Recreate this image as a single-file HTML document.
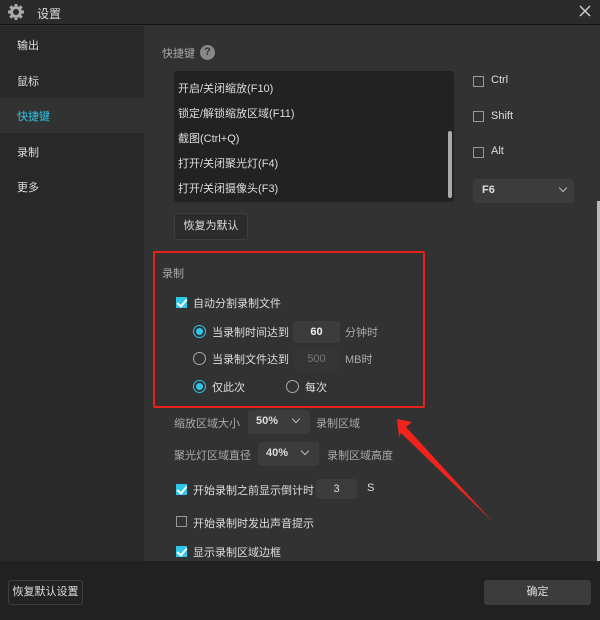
<!DOCTYPE html><html><head><meta charset="utf-8"><style>
*{margin:0;padding:0;box-sizing:border-box}
body{width:600px;height:620px;background:#323232;font-family:"Liberation Sans","Noto Sans CJK SC",sans-serif;font-size:11px;color:#ddd;position:relative;overflow:hidden}
.a{position:absolute;white-space:nowrap}
.cb{position:absolute;width:11px;height:11px;border:1px solid #999}
.cbon{position:absolute;width:11px;height:11px;background:#2fc6ea}
.cbon:after{content:"";position:absolute;left:3px;top:0px;width:4px;height:8px;border:solid #fff;border-width:0 2px 2px 0;transform:rotate(40deg)}
.rd{position:absolute;width:13px;height:13px;border:1px solid #aaa;border-radius:50%}
.rdon{position:absolute;width:13px;height:13px;border:1px solid #2fc6ea;border-radius:50%}
.rdon:after{content:"";position:absolute;left:2px;top:2px;width:7px;height:7px;border-radius:50%;background:#2fc6ea}
.box{position:absolute;background:#3c3c3c;border-radius:3px}
.chev{position:absolute;width:6px;height:6px;border:solid #bbb;border-width:0 1px 1px 0;transform:rotate(45deg)}
</style></head><body>
<div class="a" style="left:0;top:0;width:600px;height:25px;background:#2b2b2b;border-bottom:1px solid #111"></div>
<svg class="a" style="left:7px;top:3px" width="18" height="18" viewBox="0 0 18 18"><g fill="#aaa"><circle cx="9" cy="9" r="6"/><g stroke="#aaa" stroke-width="3"><line x1="9" y1="1" x2="9" y2="17"/><line x1="1" y1="9" x2="17" y2="9"/><line x1="3.3" y1="3.3" x2="14.7" y2="14.7"/><line x1="14.7" y1="3.3" x2="3.3" y2="14.7"/></g></g><circle cx="9" cy="9" r="3" fill="#2b2b2b"/></svg>
<div class="a" style="left:37px;top:5px;font-size:12px;color:#ddd">设置</div>
<svg class="a" style="left:579px;top:5px" width="12" height="12"><path d="M1 1L11 11M11 1L1 11" stroke="#ccc" stroke-width="1.5"/></svg>
<div class="a" style="left:0;top:26px;width:144px;height:535px;background:#282828"></div>
<div class="a" style="left:0;top:98px;width:144px;height:35px;background:#323232"></div>
<div class="a" style="left:17px;top:37px">输出</div>
<div class="a" style="left:17px;top:73px">鼠标</div>
<div class="a" style="left:17px;top:108px;color:#2fc6ea">快捷键</div>
<div class="a" style="left:17px;top:144px">录制</div>
<div class="a" style="left:17px;top:179px">更多</div>
<div class="a" style="left:162px;top:45px;color:#aaa">快捷键</div>
<div class="a" style="left:200px;top:45px;width:15px;height:15px;border-radius:50%;background:#888;color:#333;font-weight:bold;font-size:11px;text-align:center;line-height:15px">?</div>
<div class="a" style="left:174px;top:71px;width:280px;height:131px;background:#222;border-radius:3px"></div>
<div class="a" style="left:448px;top:131px;width:4px;height:67px;background:#aaa;border-radius:2px"></div>
<div class="a" style="left:178px;top:80px">开启/关闭缩放(F10)</div>
<div class="a" style="left:178px;top:105px">锁定/解锁缩放区域(F11)</div>
<div class="a" style="left:178px;top:130px">截图(Ctrl+Q)</div>
<div class="a" style="left:178px;top:155px">打开/关闭聚光灯(F4)</div>
<div class="a" style="left:178px;top:180px">打开/关闭摄像头(F3)</div>
<div class="cb" style="left:473px;top:76px"></div><div class="a" style="left:491px;top:74px">Ctrl</div>
<div class="cb" style="left:473px;top:111px"></div><div class="a" style="left:491px;top:110px">Shift</div>
<div class="cb" style="left:473px;top:147px"></div><div class="a" style="left:491px;top:145px">Alt</div>
<div class="box" style="left:473px;top:179px;width:101px;height:24px"></div>
<div class="a" style="left:482px;top:184px;font-weight:bold">F6</div>
<div class="chev" style="left:560px;top:185px"></div>
<div class="a" style="left:597px;top:201px;width:3px;height:360px;background:#bbb"></div>
<div class="a" style="left:174px;top:213px;width:74px;height:27px;border:1px solid #3e3e3e;border-radius:3px;background:#2c2c2c;text-align:center;line-height:25px">恢复为默认</div>
<div class="a" style="left:153px;top:251px;width:272px;height:157px;border:2px solid #e8221b;border-radius:2px"></div>
<div class="a" style="left:162px;top:265px;color:#aaa">录制</div>
<div class="cbon" style="left:176px;top:297px"></div><div class="a" style="left:193px;top:295px">自动分割录制文件</div>
<div class="rdon" style="left:193px;top:325px"></div><div class="a" style="left:212px;top:324px">当录制时间达到</div>
<div class="box" style="left:293px;top:321px;width:47px;height:22px;text-align:center;line-height:22px;color:#eee;font-weight:bold">60</div>
<div class="a" style="left:345px;top:324px;color:#aaa">分钟时</div>
<div class="rd" style="left:193px;top:352px"></div><div class="a" style="left:212px;top:351px">当录制文件达到</div>
<div class="box" style="left:293px;top:348px;width:47px;height:22px;background:#353535;text-align:center;line-height:22px;color:#777">500</div>
<div class="a" style="left:345px;top:351px;color:#aaa">MB时</div>
<div class="rdon" style="left:193px;top:380px"></div><div class="a" style="left:212px;top:379px">仅此次</div>
<div class="rd" style="left:286px;top:380px"></div><div class="a" style="left:305px;top:379px">每次</div>
<div class="a" style="left:174px;top:415px;color:#aaa">缩放区域大小</div>
<div class="box" style="left:248px;top:410px;width:62px;height:24px"></div><div class="a" style="left:256px;top:415px;font-weight:bold">50%</div><div class="chev" style="left:293px;top:416px"></div>
<div class="a" style="left:316px;top:415px;color:#aaa">录制区域</div>
<div class="a" style="left:174px;top:447px;color:#aaa">聚光灯区域直径</div>
<div class="box" style="left:258px;top:442px;width:61px;height:24px"></div><div class="a" style="left:266px;top:447px;font-weight:bold">40%</div><div class="chev" style="left:302px;top:448px"></div>
<div class="a" style="left:327px;top:447px;color:#aaa">录制区域高度</div>
<div class="cbon" style="left:176px;top:484px"></div><div class="a" style="left:193px;top:482px">开始录制之前显示倒计时</div>
<div class="box" style="left:316px;top:479px;width:41px;height:20px;text-align:center;line-height:20px">3</div>
<div class="a" style="left:367px;top:482px">S</div>
<div class="cb" style="left:176px;top:516px"></div><div class="a" style="left:193px;top:515px">开始录制时发出声音提示</div>
<div class="cbon" style="left:176px;top:546px"></div><div class="a" style="left:193px;top:544px">显示录制区域边框</div>
<div class="a" style="left:0;top:561px;width:600px;height:59px;background:#212121"></div>
<div class="a" style="left:8px;top:580px;width:75px;height:25px;border:1px solid #3e3e3e;border-radius:3px;background:#232323;text-align:center;line-height:23px">恢复默认设置</div>
<div class="a" style="left:484px;top:580px;width:107px;height:25px;border-radius:3px;background:#3c3c3c;text-align:center;line-height:25px">确定</div>
<svg class="a" style="left:0;top:0" width="600" height="620"><polygon points="397,419 412,422 406,427 493,522 401,433 399,437" fill="#f0241c"/></svg>
</body></html>
